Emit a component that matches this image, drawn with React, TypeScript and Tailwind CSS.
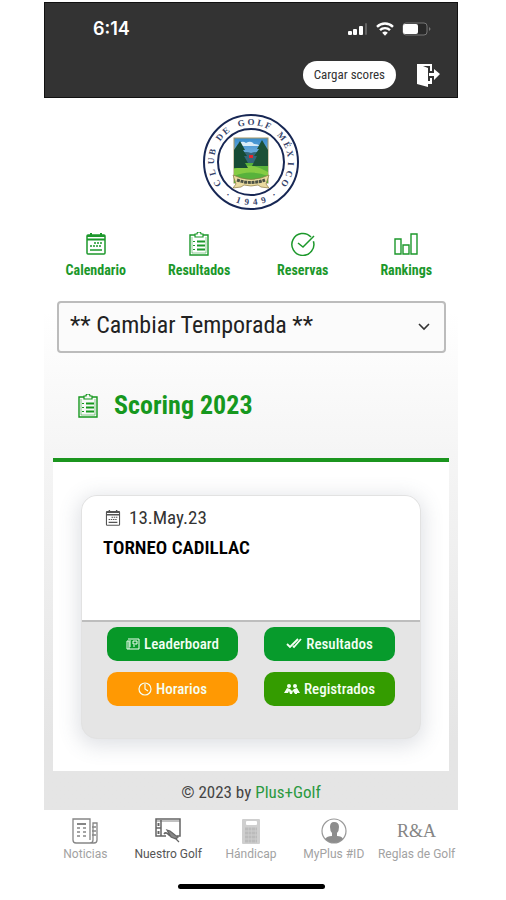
import type { ReactNode } from "react";

const CONDENSED = "font-['Roboto_Condensed','Liberation_Sans_Narrow','Open_Sans_Condensed',Roboto,sans-serif]";

function StatusIcons() {
  return (
    <div className="flex items-center gap-2">
      <svg width="20" height="14" viewBox="0 0 20 14" fill="#fff" aria-hidden="true">
        <rect x="0" y="9" width="4" height="4" rx="1" />
        <rect x="5" y="7" width="4" height="6" rx="1" />
        <rect x="11" y="4" width="4" height="9" rx="1" />
        <rect x="17" y="1" width="2" height="12" rx="1" fill="#626262" />
      </svg>
      <svg width="18" height="14" viewBox="0 0 18 14" fill="none" stroke="#fff" strokeWidth="2.4" aria-hidden="true">
        <path d="M1 4.8a11.5 11.5 0 0 1 16 0" />
        <path d="M4 8.2a7 7 0 0 1 10 0" />
        <path d="M9 13.8 6.2 10.8a4 4 0 0 1 5.6 0z" fill="#fff" stroke="none" />
      </svg>
      <svg width="30" height="14" viewBox="0 0 30 14" aria-hidden="true">
        <rect x="1" y="1" width="24" height="12" rx="3" fill="#292929" stroke="#777" />
        <rect x="1" y="2" width="15" height="10" rx="2" fill="#fff" />
        <path d="M27 5v4q3-2 0-4" fill="#777" />
      </svg>
    </div>
  );
}

function ExitIcon() {
  return (
    <svg width="24" height="25" viewBox="0 0 24 25" aria-hidden="true">
      <path d="M1 1h15v7h-2V3H7l5 2v19L1 21z" fill="#fff" />
      <path d="M12 18h2v-3h2v6h-4z" fill="#fff" />
      <path d="M13 10h5V6l6 5-6 6v-4h-5z" fill="#fff" />
    </svg>
  );
}

function ClubCrest() {
  return (
    <svg className="h-24 w-24" viewBox="0 0 96 96" role="img" aria-label="Club de Golf México">
      <defs>
        <path id="ring-top" d="M19.7 71.8A37 37 0 1 1 76.3 71.8" />
        <path id="ring-bottom" d="M15 75.6A43 43 0 0 0 81 75.6" />
        <linearGradient id="crest-sky" x1="0" y1="0" x2="0" y2="1">
          <stop offset="0" stopColor="#398dce" />
          <stop offset="1" stopColor="#d8ecf7" />
        </linearGradient>
      </defs>
      <circle cx="48" cy="48" r="47" fill="#fff" stroke="#172754" strokeWidth="2" />
      <circle cx="48" cy="48" r="33" fill="#fff" stroke="#172754" strokeWidth="2" />
      <text className="font-['Liberation_Serif',serif] text-[9px] font-bold" fill="#35436a">
        <textPath href="#ring-top" startOffset="50%" textAnchor="middle">
          C&#160; L&#160; U B&#160; &#160; D E&#160; &#160; G&#160;O L F&#160; &#160; M É X&#160; I&#160; C&#160;O
        </textPath>
      </text>
      <text className="font-['Liberation_Serif',serif] text-[9px] font-bold" fill="#35436a">
        <textPath href="#ring-bottom" startOffset="50%" textAnchor="middle">
          ·&#160; &#160; 1&#160; 9&#160; 4&#160; 9&#160; &#160; ·
        </textPath>
      </text>
      <rect x="31" y="24" width="34" height="45" fill="url(#crest-sky)" stroke="#a59564" />
      <path d="M35 30q4-4 8-1 5-3 8 1 5 0 5 2H35z" fill="#d9ecf8" />
      <path d="M31 42q10-6 17-3 8-3 17 2v10H31z" fill="#35667a" />
      <path d="M31 49h34v20H31z" fill="#58b23b" />
      <path d="M31 55q17-8 34 3v4q-18-7-34 0z" fill="#86cc43" />
      <path d="m37 27-6 9v18h14l-3-5h3l-4-7h3l-4-6h2z" fill="#164b35" />
      <path d="m59 26-5 9h2l-5 7h3l-5 10h16V36z" fill="#1c5137" />
      <path d="M46 41h4v3h-4z" fill="#e1272d" />
      <path d="m30 61 8 3q10 3 20 0l8-3-3 9 3 4-8-1-3-2q-7 2-14 0l-3 2-8 1 3-4z" fill="#eadba0" stroke="#8a7843" strokeWidth=".7" />
      <path d="M34 66q14 5 28 0" fill="none" stroke="#4b5145" strokeWidth="3" strokeDasharray="3 .7" />
    </svg>
  );
}

function CalendarIcon({ className }: { className: string }) {
  return (
    <svg className={className} viewBox="0 0 20 22" fill="none" stroke="currentColor" aria-hidden="true">
      <rect x="1" y="2" width="18" height="19" rx="1" strokeWidth="1.5" />
      <path d="M1 3h18M1 6.5h18" strokeWidth="2" />
      <path d="M5 0v4M15 0v4" strokeWidth="2" />
      <path d="M8 10h9M4 13h12" strokeWidth="1.5" strokeDasharray="2 1" />
      <path d="M4 17h12" strokeWidth="1.5" />
    </svg>
  );
}

function ClipboardIcon({ className }: { className: string }) {
  return (
    <svg className={className} viewBox="0 0 20 24" fill="none" stroke="currentColor" aria-hidden="true">
      <path d="M6 3H1v20h18V3h-5" strokeWidth="1.4" />
      <path d="M3 5v16h14V5" strokeWidth=".5" />
      <path d="M6 2h2q0-2 2-2t2 2h2v3H6z" strokeWidth="1.2" />
      <path d="M4 9.5h2M4 13.5h2M4 17.5h2" />
      <path d="M8 9.5h8M8 13.5h8M8 17.5h8" strokeWidth="1.8" />
    </svg>
  );
}

function CheckCircleIcon() {
  return (
    <svg className="h-6 w-6" viewBox="0 0 24 24" fill="none" stroke="currentColor" strokeWidth="1.5" aria-hidden="true">
      <path d="M20 5a11 11 0 1 0 2.4 4.2M7 11l5 4L23 4" />
    </svg>
  );
}

function BarsIcon() {
  return (
    <svg className="h-6 w-6" viewBox="0 0 24 24" fill="none" stroke="currentColor" strokeWidth="1.4" aria-hidden="true">
      <path d="M1 7h6v15H1zM9 13h6v9H9zM17 2h6v20h-6z" />
    </svg>
  );
}

function NavItem({ label, children }: { label: string; children: ReactNode }) {
  return (
    <a href="#" className="flex flex-1 flex-col items-center gap-1 text-sm leading-5 font-bold text-[#1c982b]">
      <span className="flex h-6 items-center">{children}</span>
      {label}
    </a>
  );
}

function ActionButton({ label, color, children }: { label: string; color: string; children: ReactNode }) {
  return (
    <button type="button" className={`flex h-[34px] items-center justify-center gap-1 rounded-[10px] text-[15px] font-medium text-[#f4fff4] ${color}`}>
      {children}
      {label}
    </button>
  );
}

function NewsIcon() {
  return (
    <svg width="26" height="26" viewBox="0 0 26 26" fill="none" stroke="#868686" strokeWidth="1.3" aria-hidden="true">
      <path d="M18 22V1H1v21q0 3 3 3h18q3 0 3-3V5h-4v17q0 3-3 3" />
      <path d="M5 6h9" strokeWidth="2" />
      <path d="M5 10h3M11 10h3M5 14h3M11 14h3M5 18h3M11 18h3M20 9h4M20 13h4M20 17h4" />
    </svg>
  );
}

function CourseIcon() {
  return (
    <svg width="26" height="26" viewBox="0 0 26 26" fill="none" stroke="#646464" strokeWidth="1.5" aria-hidden="true">
      <path d="M11 18H1V1h24v17h-3" />
      <path d="M1 3h24" strokeWidth=".8" />
      <path d="M1 10h5M6 2v16" />
      <path d="M3.500 5v3M3.500 13v3" strokeWidth="2" />
      <path d="m12 12 3 1 5 4 3 2-2 2-5-2zM20 20l4 4" fill="#888" strokeWidth="1.2" />
      <path d="M9 16q2-3 6 2" />
    </svg>
  );
}

function CalculatorIcon() {
  return (
    <svg width="26" height="26" viewBox="0 0 26 26" aria-hidden="true">
      <rect x="4" y="1" width="18" height="25" rx="1" fill="#cfcfcf" />
      <rect x="8" y="3" width="11" height="4" rx="1" fill="#fff" />
      <path d="M7 11h12M7 15h12M7 19h12M7 23h12" stroke="#bbb" strokeWidth="3" strokeDasharray="3 .5" />
    </svg>
  );
}

function ProfileIcon() {
  return (
    <svg width="26" height="26" viewBox="0 0 26 26" aria-hidden="true">
      <circle cx="13" cy="13" r="12" fill="#fff" stroke="#999" strokeWidth="1.2" />
      <path d="M4 21q2-3 7-3v-3q-2-2-2-6 0-5 4-5 5 0 5 5 0 4-2 6v3q5 0 6 3-9 8-18 0" fill="#8d8d8d" />
    </svg>
  );
}

function Tab({ label, active = false, children }: { label: string; active?: boolean; children: ReactNode }) {
  return (
    <a href="#" className={`flex min-w-0 flex-1 flex-col items-center gap-0.5 text-xs leading-4 whitespace-nowrap ${active ? "text-[#555]" : "text-[#a2a2a2]"}`}>
      <span className="flex h-[26px] items-center">{children}</span>
      {label}
    </a>
  );
}

export default function App() {
  return (
    <div className={`min-h-screen bg-white pt-0.5 pr-12 pl-11 text-[#222] ${CONDENSED}`}>
      <header className="h-24 border border-[#111] bg-[#333]">
        <div className="flex items-center justify-between pt-3 pr-[25px] pl-12">
          <span className="font-[Inter,sans-serif] text-lg leading-7 font-semibold text-white">6:14</span>
          <StatusIcons />
        </div>
        <div className="flex items-center justify-end gap-5 pt-[18px] pr-[17px]">
          <button type="button" className="h-7 rounded-full bg-white px-[11px] text-[13px] text-[#333]">Cargar scores</button>
          <button type="button" aria-label="Salir"><ExitIcon /></button>
        </div>
      </header>

      <main className="bg-linear-to-b from-white from-30% via-[#f5f5f5] via-50% to-[#e5e5e5] to-90%">
        <div className="flex justify-center pt-4">
          <ClubCrest />
        </div>
        <nav className="flex pt-[22px]">
          <NavItem label="Calendario"><CalendarIcon className="h-[22px] w-5" /></NavItem>
          <NavItem label="Resultados"><ClipboardIcon className="h-6 w-5" /></NavItem>
          <NavItem label="Reservas"><CheckCircleIcon /></NavItem>
          <NavItem label="Rankings"><BarsIcon /></NavItem>
        </nav>
        <div className="relative mt-[21px] mr-3 ml-[13px]">
          <select aria-label="Temporada" className="h-[52px] w-full appearance-none rounded border-2 border-[#bcbcbc] bg-[#fbfbfb] px-[11px] pb-1 text-2xl text-[#222]">
            <option>** Cambiar Temporada **</option>
          </select>
          <svg className="pointer-events-none absolute top-[22px] right-4 h-2 w-3" viewBox="0 0 12 8" fill="none" stroke="#333" strokeWidth="1.6" aria-hidden="true">
            <path d="m1 1 5 5 5-5" />
          </svg>
        </div>
        <h1 className="flex h-[105px] items-center gap-4 pl-[34px] text-[26px] font-bold text-[#16981e]">
          <ClipboardIcon className="h-6 w-5" />
          Scoring 2023
        </h1>
        <section className="mx-[9px] border-t-4 border-[#1b951e] bg-white px-7 pt-[33px] pb-8">
          <article className="overflow-hidden rounded-2xl border border-[#e2e2e2] bg-[#e5e5e5] shadow-[0_4px_20px_3px_rgba(80,90,110,0.18)]">
            <div className="h-[126px] border-b-2 border-[#bdbdbd] bg-white px-[21px] pt-2">
              <p className="flex items-center gap-2 pl-0.5 text-[19px] leading-7 text-[#333]">
                <CalendarIcon className="h-4 w-4 text-[#555]" />
                13.May.23
              </p>
              <h2 className="text-[19px] leading-8 font-semibold text-black">TORNEO CADILLAC</h2>
            </div>
            <div className="grid grid-cols-2 gap-x-[26px] gap-y-[11px] px-[25px] pt-[5px] pb-8">
              <ActionButton label="Leaderboard" color="bg-[#079828]">
                <svg width="14" height="12" viewBox="0 0 14 12" fill="none" stroke="currentColor" aria-hidden="true">
                  <path d="M2 1h11v10H1V3h2v8M4 2v7M7 3h4v3H7zM7 8h2" />
                </svg>
              </ActionButton>
              <ActionButton label="Resultados" color="bg-[#079b2c]">
                <svg width="16" height="12" viewBox="0 0 16 12" fill="none" stroke="currentColor" strokeWidth="1.8" aria-hidden="true">
                  <path d="m1 6 3 3 8-8M7 8l1 1 7-8" />
                </svg>
              </ActionButton>
              <ActionButton label="Horarios" color="bg-[#ff9903]">
                <svg width="14" height="14" viewBox="0 0 14 14" fill="none" stroke="currentColor" strokeWidth="1.2" aria-hidden="true">
                  <circle cx="7" cy="7" r="6" />
                  <path d="M7 2v5l3 2" />
                </svg>
              </ActionButton>
              <ActionButton label="Registrados" color="bg-[#349c00]">
                <svg width="16" height="12" viewBox="0 0 16 12" fill="currentColor" aria-hidden="true">
                  <circle cx="5" cy="3" r="2" />
                  <circle cx="11" cy="3" r="2" />
                  <path d="m3 5-3 5h4l1-2 1 3h2l1-3 2 3h2v-1h3l-3-5-3 1-2 2-2-2z" />
                </svg>
              </ActionButton>
            </div>
          </article>
        </section>
        <footer className="flex h-[39px] items-center justify-center gap-1 pt-1 text-[17px] text-[#444]">
          © 2023 by <a href="#" className="text-[#2a9940]">Plus+Golf</a>
        </footer>
      </main>

      <nav className="flex pt-2 font-[Roboto,sans-serif]">
        <Tab label="Noticias"><NewsIcon /></Tab>
        <Tab label="Nuestro Golf" active><CourseIcon /></Tab>
        <Tab label="Hándicap"><CalculatorIcon /></Tab>
        <Tab label="MyPlus #ID"><ProfileIcon /></Tab>
        <Tab label="Reglas de Golf">
          <span className="font-['Liberation_Serif',serif] text-lg text-[#858585]">R&amp;A</span>
        </Tab>
      </nav>
      <div className="mx-auto mt-[22px] h-[5px] w-[147px] rounded-full bg-black" />
    </div>
  );
}
